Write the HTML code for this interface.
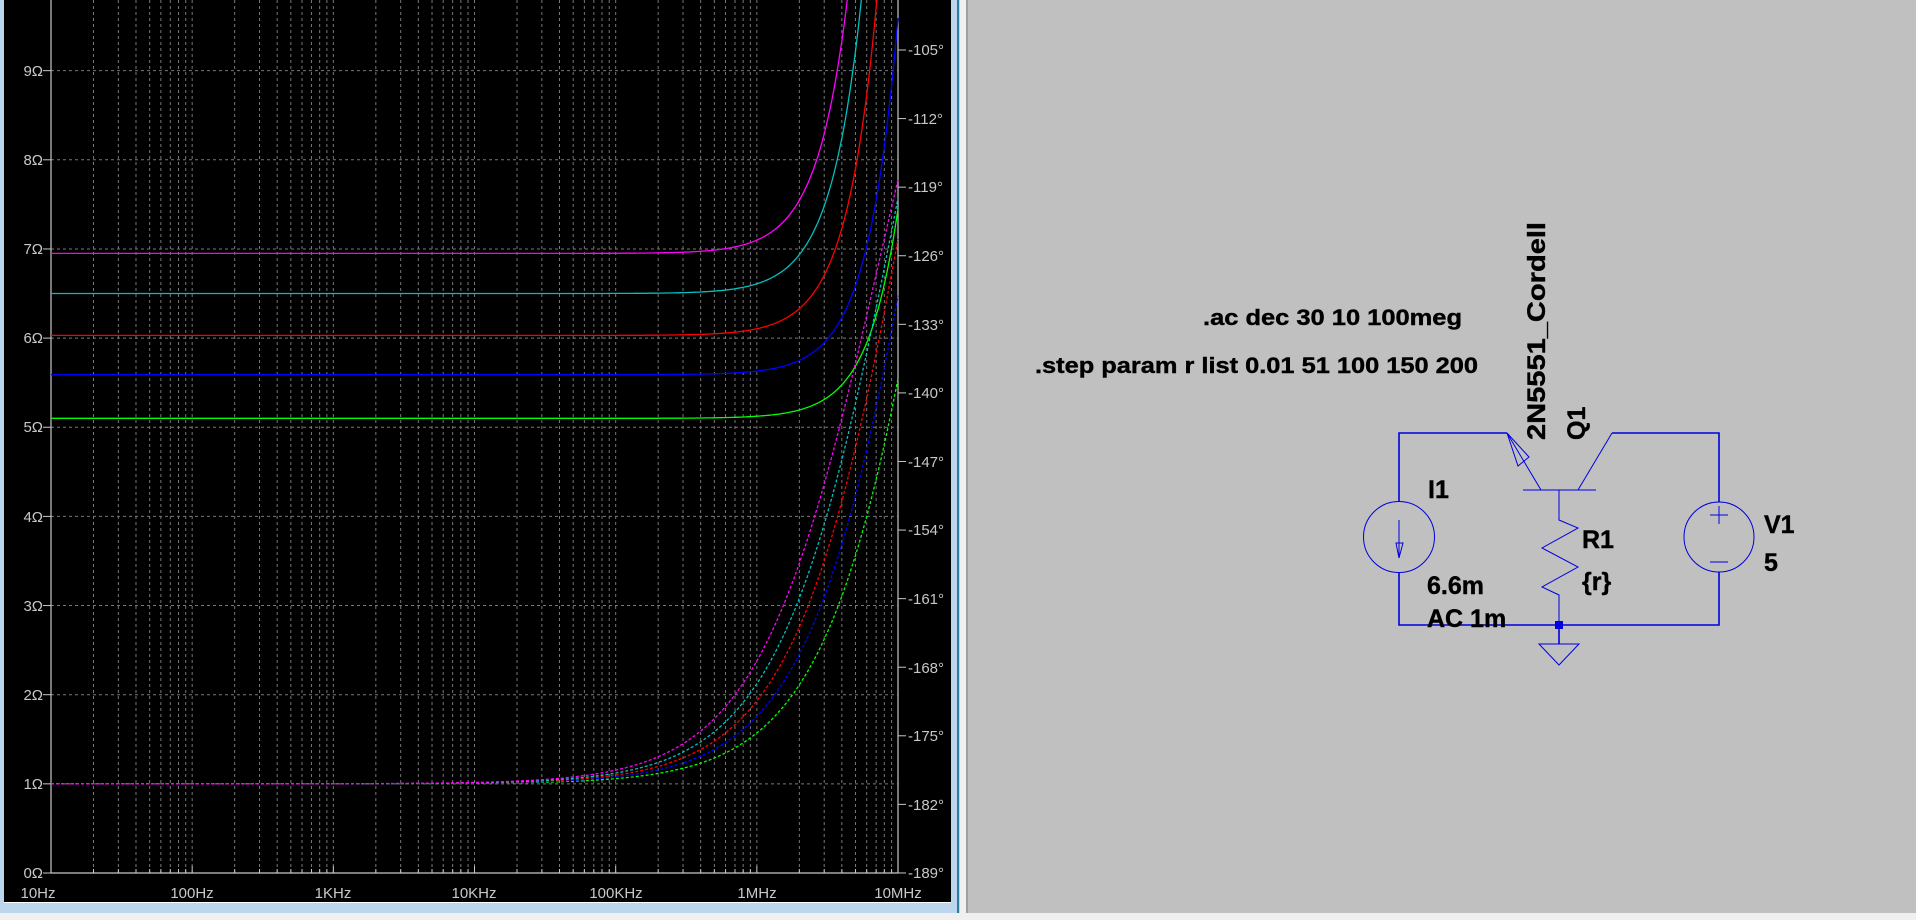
<!DOCTYPE html>
<html><head><meta charset="utf-8"><style>
html,body{margin:0;padding:0;width:1916px;height:920px;overflow:hidden;background:#c0c0c0}
svg{position:absolute;left:0;top:0}
.ax{font-family:"Liberation Sans",sans-serif;font-size:15px;fill:#c8c8c8}
.sc{font-family:"Liberation Sans",sans-serif;font-weight:bold;font-size:22px;fill:#000}
</style></head><body>
<svg width="1916" height="920" xmlns="http://www.w3.org/2000/svg">
<rect x="0" y="0" width="970" height="920" fill="#f0f0f0"/>
<rect x="0" y="0" width="960" height="913" fill="#bcd6ee"/>
<rect x="957" y="0" width="2" height="913" fill="#2a7d9c"/>
<rect x="4" y="0" width="947" height="903" fill="#fff"/>
<rect x="4" y="0" width="947" height="902" fill="#000"/>
<rect x="966" y="0" width="2" height="913" fill="#a0a0a0"/>
<rect x="968" y="0" width="948" height="913" fill="#c0c0c0"/>
<rect x="960" y="913" width="956" height="7" fill="#f0f0f0"/>
<g id="grid" stroke="#787878" stroke-width="1" stroke-dasharray="3,3" fill="none"></g>
<g stroke="#c8c8c8" stroke-width="1.2" fill="none">
<line x1="51" y1="0" x2="51" y2="873"/>
<line x1="898" y1="0" x2="898" y2="873"/>
<line x1="51" y1="873" x2="898" y2="873"/>
</g>
<g id="ticks" stroke="#c8c8c8" stroke-width="1"></g>
<g id="curves" fill="none" stroke-width="1.3"></g>
<g class="ax" text-anchor="end">
<text x="43" y="76">9Ω</text><text x="43" y="165">8Ω</text><text x="43" y="254">7Ω</text>
<text x="43" y="343">6Ω</text><text x="43" y="432">5Ω</text><text x="43" y="522">4Ω</text>
<text x="43" y="611">3Ω</text><text x="43" y="700">2Ω</text><text x="43" y="789">1Ω</text>
<text x="43" y="878">0Ω</text>
</g>
<g class="ax">
<text x="908" y="55">-105°</text><text x="908" y="124">-112°</text><text x="908" y="192">-119°</text>
<text x="908" y="261">-126°</text><text x="908" y="330">-133°</text><text x="908" y="398">-140°</text>
<text x="908" y="467">-147°</text><text x="908" y="535">-154°</text><text x="908" y="604">-161°</text>
<text x="908" y="673">-168°</text><text x="908" y="741">-175°</text><text x="908" y="810">-182°</text>
<text x="908" y="878">-189°</text>
</g>
<g class="ax" text-anchor="middle">
<text x="38" y="898">10Hz</text><text x="192" y="898">100Hz</text><text x="333" y="898">1KHz</text>
<text x="474" y="898">10KHz</text><text x="616" y="898">100KHz</text><text x="757" y="898">1MHz</text>
<text x="898" y="898">10MHz</text>
</g>
<g stroke="#0000e0" stroke-width="1.6" fill="none">
<polyline points="1399,502 1399,433 1507,433"/>
<polyline points="1399,572 1399,625 1719,625 1719,572"/>
<polyline points="1612,433 1719,433 1719,502"/>
<line x1="1559" y1="625" x2="1559" y2="644"/>
</g>
<g stroke="#0000e0" stroke-width="1" fill="none">
<line x1="1507" y1="433" x2="1541" y2="490"/>
<line x1="1612" y1="433" x2="1578" y2="490"/>
<line x1="1523" y1="490" x2="1596" y2="490"/>
<polygon points="1507,433 1518,466 1529,457"/>
<polyline points="1559,490 1559,520 1578,528 1542,548 1578,567 1542,587 1559,595 1559,625"/>
<circle cx="1399" cy="537" r="35.5"/>
<line x1="1399" y1="520" x2="1399" y2="558"/>
<polygon points="1396,543 1403,543 1399,558"/>
<circle cx="1719" cy="537" r="35"/>
<line x1="1710" y1="515" x2="1728" y2="515"/><line x1="1719" y1="506" x2="1719" y2="524"/>
<line x1="1710" y1="562" x2="1728" y2="562"/>
<polygon points="1539,644 1579,644 1559,665"/>
</g>
<rect x="1555" y="621" width="8" height="8" fill="#0000e0"/>
<g class="sc" stroke="#000" stroke-width="0.4">
<text x="1203" y="325" textLength="259" lengthAdjust="spacingAndGlyphs">.ac dec 30 10 100meg</text>
<text x="1035" y="373" textLength="443" lengthAdjust="spacingAndGlyphs">.step param r list 0.01 51 100 150 200</text>
<text x="1428" y="498" font-size="25">I1</text>
<text x="1582" y="548" font-size="25">R1</text>
<text x="1582" y="590" font-size="25">{r}</text>
<text x="1764" y="533" font-size="25">V1</text>
<text x="1764" y="571" font-size="25">5</text>
<text x="1427" y="594" font-size="25">6.6m</text>
<text x="1427" y="627" font-size="25">AC 1m</text>
<text transform="translate(1545,440) rotate(-90)" font-size="25" textLength="218" lengthAdjust="spacingAndGlyphs">2N5551_Cordell</text>
<text transform="translate(1585,440) rotate(-90)" font-size="25">Q1</text>
</g>
</svg>
<script>
const NS="http://www.w3.org/2000/svg";
const X0=51,DEC=141.17,Y0=873,OH=89.15;
const fx=f=>X0+DEC*(Math.log10(f)-1);
const oy=o=>Y0-OH*o;
function el(p,tag,a){const e=document.createElementNS(NS,tag);for(const k in a)e.setAttribute(k,a[k]);p.appendChild(e);return e;}
const g=document.getElementById('grid'),t=document.getElementById('ticks');
for(let d=1;d<7;d++)for(let m=1;m<=9;m++){const f=Math.pow(10,d)*m;if(f<=10||f>1e7)continue;const x=fx(f);
 el(g,'line',{x1:x,y1:0,x2:x,y2:873});el(t,'line',{x1:x,y1:873,x2:x,y2:m==1?866:869});}
for(let o=1;o<=9;o++){el(g,'line',{x1:51,y1:oy(o),x2:898,y2:oy(o)});}
for(let o=0;o<=9;o++)el(t,'line',{x1:43,y1:oy(o),x2:51,y2:oy(o)});
for(let i=0;i<=12;i++){const y=50+i*68.58;el(t,'line',{x1:898,y1:y,x2:906,y2:y});}
const c=document.getElementById('curves');
const cols=['#ff00ff','#00c0c0','#ff0000','#0000ff','#00ff00'];
const Z0=[6.95,6.5,6.03,5.59,5.1],A=[0.149,0.109,0.075,0.04,0.0235];
const T=[0,0.28,0.5,0.72,1];
for(let k=4;k>=0;k--){let s='',d='';
 const Vm=12+8*T[k],fc=Math.pow(10,Math.log10(7.7e6)*(1-T[k])+Math.log10(34e6)*T[k]);
 for(let i=0;i<=600;i++){const l=1+6*i/600,f=Math.pow(10,l),x=fx(f);
  const z=Z0[k]+A[k]*Math.pow(f/1e6,2);const y=Math.max(oy(z),-5);
  s+=(i?'L':'M')+x.toFixed(1)+','+y.toFixed(1);
  const u=f/fc,v=1+Vm*u/(1+u);
  d+=(i?'L':'M')+x.toFixed(1)+','+oy(v).toFixed(1);}
 el(c,'path',{d:s,stroke:cols[k]});
 el(c,'path',{d:d,stroke:cols[k],'stroke-dasharray':'3,2'});}
</script>
</body></html>
